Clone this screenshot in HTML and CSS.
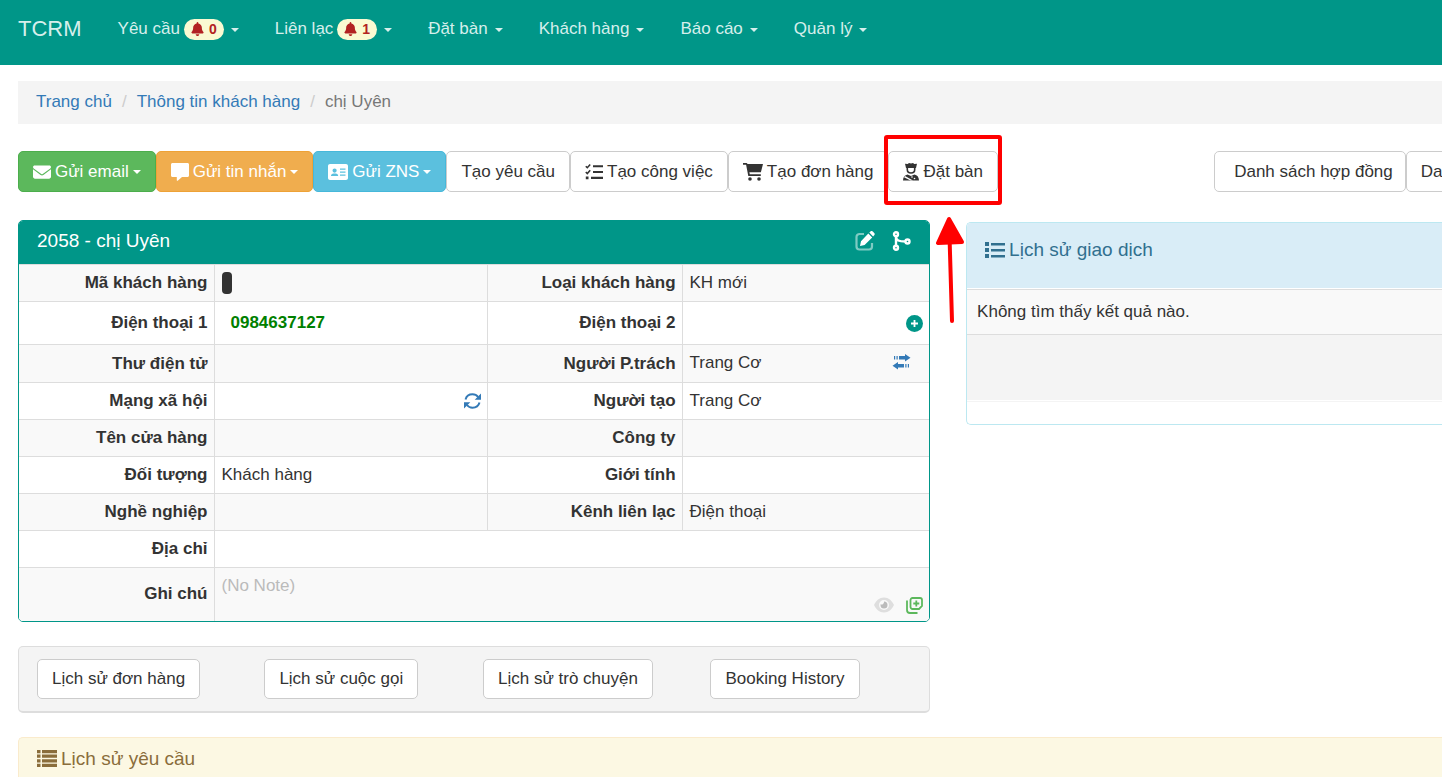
FILE: index.html
```html
<!DOCTYPE html>
<html lang="vi">
<head>
<meta charset="utf-8">
<meta name="viewport" content="width=device-width, initial-scale=1">
<title>TCRM</title>
<link rel="stylesheet" href="styles.css">
</head>
<body>
<svg class="sprite" aria-hidden="true">
  <symbol id="bell" viewBox="0 0 448 512"><path d="M224 0c-18 0-32 14-32 32v19C119 66 64 130 64 208v19c0 47-17 92-48 127l-8 9c-8 9-10 23-5 34s16 19 29 19h384c13 0 24-7 29-19s3-25-5-34l-8-9c-31-35-48-80-48-127v-19c0-78-55-142-128-157V32c0-18-14-32-32-32zM288 448H160c0 17 7 33 19 45s28 19 45 19 33-7 45-19 19-28 19-45z"/></symbol>
  <symbol id="list-ul" viewBox="0 0 20 18"><path d="M0 1h4v4H0zM0 7h4v4H0zM0 13h4v4H0zM6 2h14v2.500H6zM6 8h14v2.500H6zM6 14h14v2.500H6z"/></symbol>
</svg>

<nav class="navbar">
  <a class="brand" href="#">TCRM</a>
  <a class="nav-item" href="#">Yêu cầu <span class="badge"><svg class="bell"><use href="#bell"/></svg>0</span><span class="caret"></span></a>
  <a class="nav-item" href="#">Liên lạc <span class="badge"><svg class="bell"><use href="#bell"/></svg>1</span><span class="caret"></span></a>
  <a class="nav-item" href="#">Đặt bàn<span class="caret"></span></a>
  <a class="nav-item" href="#">Khách hàng<span class="caret"></span></a>
  <a class="nav-item" href="#">Báo cáo<span class="caret"></span></a>
  <a class="nav-item" href="#">Quản lý<span class="caret"></span></a>
</nav>

<main class="page">
  <ol class="breadcrumb">
    <li><a href="#">Trang chủ</a></li>
    <li><a href="#">Thông tin khách hàng</a></li>
    <li>chị Uyên</li>
  </ol>

  <div class="toolbar">
    <div class="actions">
      <button class="btn green" type="button"><svg class="icon" viewBox="0 0 18 18"><path d="M1.700 2.500h14.600c.9 0 1.700.7 1.700 1.600 0 .5-.3 1-.7 1.300L9.700 11.100c-.4.300-1 .3-1.400 0L.7 5.400C.3 5.100 0 4.600 0 4.100c0-.9.800-1.600 1.700-1.600zM0 6.300l7.600 5.700c.8.600 2 .6 2.800 0L18 6.300v7.500c0 1-.9 1.900-2 1.900H2c-1.100 0-2-.9-2-1.900z"/></svg>Gửi email<span class="caret"></span></button>
      <button class="btn orange" type="button"><svg class="icon" viewBox="0 0 18 18"><path d="M1.500 0h15c.8 0 1.500.700 1.500 1.500v11c0 .8-.7 1.500-1.500 1.500H11l-4.300 3.700c-.4.300-.9.100-.9-.4V14H1.500C.700 14 0 13.300 0 12.500v-11C0 .7.7 0 1.500 0z"/></svg>Gửi tin nhắn<span class="caret"></span></button>
      <button class="btn blue" type="button"><svg class="icon wide" viewBox="0 0 20 18"><path fill-rule="evenodd" d="M2 1h16c1.100 0 2 .9 2 2v12c0 1.100-.9 2-2 2H2c-1.100 0-2-.9-2-2V3c0-1.100.9-2 2-2zm4.600 4.500a2.100 2.100 0 1 0 0 4.200 2.100 2.100 0 0 0 0-4.200zM5.600 10.500C4 10.500 3 11.500 3 13h7.200c0-1.500-1-2.500-2.600-2.500zM12 5.500v1.200h5.500V5.500zm0 3v1.200h5.500V8.500zm0 3v1.200h5.500v-1.200z"/></svg>Gửi ZNS<span class="caret"></span></button>
      <button class="btn" type="button">Tạo yêu cầu</button>
      <button class="btn" type="button"><svg class="icon" viewBox="0 0 18 18"><path d="M8 2.200h10v2.100H8zM8 8h10v2.100H8zM6 13.800h12v2.100H6zM.8 13.500h2.700v2.700H.8z"/><path class="stroke" d="M.8 3.200l1.500 1.500L5.200 1.500M.8 9l1.500 1.500 2.900-3.200"/></svg>Tạo công việc</button>
      <button class="btn" type="button"><svg class="icon wide" viewBox="0 0 20 18"><path d="M0 0h3.300c.6 0 1 .4 1.200 1H20l-2.100 8.300H6.400l.4 2h11v1.700H5.300L3.100 1.700H0z"/><circle cx="7" cy="16" r="1.800"/><circle cx="16" cy="16" r="1.800"/></svg>Tạo đơn hàng</button>
      <div class="highlighted">
        <button class="btn" type="button"><svg class="icon chef" viewBox="0 0 16 18"><path d="M2 .8L4.700 1 6 0l2 .6L10 0l1.300 1 2.700-.2L13 5H3z"/><path class="stroke" d="M4.300 4.500v2C4.300 8.600 5.800 10 8 10s3.700-1.400 3.700-3.500v-2"/><path d="M0 17.500c0-3.400 2-5.600 4.500-6L8 13l3.500-1.500c2.500.4 4.500 2.600 4.500 6z"/><path class="dot" d="M2 13l8 4.500H7.500L1 14.300z"/><circle class="dot" cx="9" cy="14" r=".8"/><circle class="dot" cx="11.500" cy="15.500" r=".8"/></svg>Đặt bàn</button>
        <span class="marker"></span>
        <svg class="arrow" viewBox="0 0 28 108" aria-hidden="true"><path d="M13 3L2 27l24-1z" fill="#f00" stroke="#f00" stroke-width="4" stroke-linejoin="round"/><path d="M13.500 20L16 105" stroke="#f00" stroke-width="4" stroke-linecap="round"/></svg>
      </div>
    </div>
    <div class="lists">
      <button class="btn roomy" type="button">Danh sách hợp đồng</button>
      <button class="btn" type="button">Danh sách</button>
    </div>
  </div>

  <div class="columns">
    <div class="left">
      <section class="panel customer">
        <header>
          <h2>2058 - chị Uyên</h2>
          <button class="plain" type="button" aria-label="Edit"><svg width="20" height="20" viewBox="0 0 20 20"><path d="M9 3H4.500A3 3 0 0 0 1.500 6v9.500a3 3 0 0 0 3 3H14a3 3 0 0 0 3-3V12" fill="none" stroke="#7fcbc3" stroke-width="2.200"/><path fill="#fff" d="M13.300 2.500l3.900 3.900-7.600 7.600-4.600 1 1-4.700zM14.300 1.500L15.400.5c.7-.7 1.700-.7 2.400 0l1.400 1.400c.7.7.7 1.700 0 2.400l-1.100 1.100z"/></svg></button>
          <button class="plain" type="button" aria-label="Merge"><svg width="19" height="20" viewBox="0 0 19 20"><g fill="none" stroke="#fff" stroke-width="2.400"><circle cx="4" cy="3.200" r="2"/><circle cx="4" cy="16.800" r="2"/><circle cx="15.500" cy="10.500" r="2"/><path d="M4 5.300v9.400M4 5.500c0 4 3 5 9.400 5"/></g></svg></button>
        </header>
        <table>
          <colgroup><col class="c-label"><col class="c-value"><col class="c-label"><col class="c-last"></colgroup>
          <tbody>
          <tr><th scope="row">Mã khách hàng</th><td><span class="redacted"></span></td><th scope="row">Loại khách hàng</th><td>KH mới</td></tr>
          <tr class="phone"><th scope="row">Điện thoại 1</th><td><a class="tel" href="#">0984637127</a></td><th scope="row">Điện thoại 2</th><td><div class="end"><button class="plain" type="button" aria-label="Add"><svg width="17" height="17" viewBox="0 0 17 17"><circle cx="8.500" cy="8.500" r="8.500" fill="#009688"/><path d="M8.500 5v7M5 8.500h7" stroke="#fff" stroke-width="1.800"/></svg></button></div></td></tr>
          <tr class="assigned"><th scope="row">Thư điện tử</th><td></td><th scope="row">Người P.trách</th><td><div class="split owner">Trang Cơ<button class="plain" type="button" aria-label="Transfer"><svg width="19" height="16" viewBox="0 0 19 16"><path fill="#337ab7" d="M2 2h1.200v3.500H2zM4.500 2h1.200v3.500H4.500zM7 2h6V0l5.500 3.800L13 7.500v-2H7zM17 10h-1.200v3.500H17zM14.500 10h-1.200v3.500h1.200zM12 10H6V8L.5 11.800 6 15.500v-2h6z"/></svg></button></div></td></tr>
          <tr><th scope="row">Mạng xã hội</th><td><div class="end"><button class="plain" type="button" aria-label="Refresh"><svg width="17" height="16" viewBox="0 0 17 16"><path d="M1.500 6.500C2.400 3.300 5.200 1.300 8.500 1.300c2.300 0 4.300 1 5.600 2.700M15.500 9.500c-.9 3.200-3.700 5.200-7 5.200-2.300 0-4.300-1-5.600-2.700" fill="none" stroke="#337ab7" stroke-width="2"/><path fill="#337ab7" d="M17 .5v6.300h-6.300zM0 15.500V9.200h6.300z"/></svg></button></div></td><th scope="row">Người tạo</th><td>Trang Cơ</td></tr>
          <tr><th scope="row">Tên cửa hàng</th><td></td><th scope="row">Công ty</th><td></td></tr>
          <tr><th scope="row">Đối tượng</th><td>Khách hàng</td><th scope="row">Giới tính</th><td></td></tr>
          <tr><th scope="row">Nghề nghiệp</th><td></td><th scope="row">Kênh liên lạc</th><td>Điện thoại</td></tr>
          <tr><th scope="row">Địa chỉ</th><td colspan="3"></td></tr>
          <tr class="note"><th scope="row">Ghi chú</th><td colspan="3"><span class="muted">(No Note)</span>
            <div class="end note-tools">
              <button class="plain" type="button" aria-label="View"><svg width="20" height="16" viewBox="0 0 20 16"><path fill="#dedede" fill-rule="evenodd" d="M10 .5c4.500 0 8 3 10 7.500-2 4.500-5.500 7.500-10 7.500S2 12.500 0 8C2 3.500 5.500.5 10 .5zM10 3a5 5 0 1 0 0 10 5 5 0 0 0 0-10z"/><path fill="#bbb" d="M10 4.500a3.500 3.500 0 1 1-3.500 3.500c0-.3 0-.5.1-.7A2.500 2.500 0 0 0 10 4.500z"/></svg></button>
              <button class="plain" type="button" aria-label="Add note"><svg width="17" height="17" viewBox="0 0 17 17"><g fill="none" stroke="#5cb85c" stroke-width="1.800"><path d="M6.500 1H14a2 2 0 0 1 2 2v6l-3 3H6.500a2 2 0 0 1-2-2V3a2 2 0 0 1 2-2zM1 3.500V13a3 3 0 0 0 3 3h7.500M10.300 3.500v6M7.300 6.500h6"/></g></svg></button>
            </div></td></tr>
          </tbody>
        </table>
      </section>

      <section class="history">
        <div><button class="btn" type="button">Lịch sử đơn hàng</button></div>
        <div><button class="btn" type="button">Lịch sử cuộc gọi</button></div>
        <div><button class="btn" type="button">Lịch sử trò chuyện</button></div>
        <div><button class="btn" type="button">Booking History</button></div>
      </section>
    </div>

    <section class="panel deals">
      <header><h2><svg class="icon wide"><use href="#list-ul"/></svg>Lịch sử giao dịch</h2></header>
      <p class="empty">Không tìm thấy kết quả nào.</p>
      <div class="panel-footer"></div>
    </section>
  </div>

  <section class="requests">
    <h2><svg class="icon wide" viewBox="0 0 20 18"><path d="M0 0h3.500v3.200H0zM0 4.600h3.500v3.200H0zM0 9.200h3.500v3.200H0zM0 13.800h3.500V17H0zM5 0h15v3.200H5zM5 4.600h15v3.200H5zM5 9.200h15v3.200H5zM5 13.800h15V17H5z"/></svg>Lịch sử yêu cầu</h2>
  </section>
</main>
</body>
</html>
```
FILE: styles.css
```css
* { box-sizing: border-box; }
body {
  margin: 0;
  background: #fff;
  color: #333;
  font: 17px/24px "Liberation Sans", Arial, sans-serif;
}
a { color: #337ab7; text-decoration: none; }
h2 { margin: 0; font-size: 19px; line-height: 22px; font-weight: 400; }
button { font: inherit; color: inherit; cursor: pointer; }
svg { display: block; fill: currentColor; flex: none; }
.sprite { position: absolute; width: 0; height: 0; }

.caret {
  display: inline-block;
  border: 4px solid transparent;
  border-top-color: currentColor;
  border-bottom: 0;
}

.navbar {
  display: flex;
  align-items: flex-start;
  gap: 36px;
  min-height: 65px;
  padding: 17px 18px;
  background: #009688;
}
.navbar a { color: #d6efec; white-space: nowrap; }
.navbar .brand { font-size: 22px; }
.nav-item { display: flex; align-items: center; gap: 4px; }
.nav-item .caret { margin: 1px 0 0 3px; }
.badge {
  display: flex;
  align-items: center;
  gap: 5px;
  height: 21px;
  padding: 0 7px;
  border-radius: 11px;
  background: #fafad2;
  color: #b22222;
  font-size: 14px;
  font-weight: 700;
}
.bell { width: 13px; height: 14px; }

.page { padding: 16px 0 0 18px; overflow: hidden; }

.breadcrumb {
  display: flex;
  margin: 0 0 27px;
  padding: 9px 18px 10px;
  list-style: none;
  background: #f4f4f4;
  color: #777;
}
.breadcrumb li + li::before { content: "/"; padding: 0 10px; color: #ccc; }

.toolbar { display: flex; justify-content: space-between; margin-bottom: 28px; }
.actions { display: flex; }
.lists { display: flex; flex: 0 0 16%; overflow: hidden; }
.btn {
  display: inline-flex;
  flex: none;
  align-items: center;
  gap: 4px;
  height: 41px;
  padding: 0 14px;
  border: 1px solid #ccc;
  border-radius: 5px;
  background: #fff;
  white-space: nowrap;
}
.btn.roomy { padding: 0 12px 0 19px; }
.btn.green { background: #5cb85c; border-color: #4cae4c; color: #fff; }
.btn.orange { background: #f0ad4e; border-color: #eea236; color: #fff; }
.btn.blue { background: #5bc0de; border-color: #46b8da; color: #fff; }
.icon { width: 18px; height: 18px; }
.icon.wide { width: 20px; }
.icon.chef { width: 16px; }
.stroke { fill: none; stroke: currentColor; stroke-width: 1.6; }
.dot { fill: #fff; }

.highlighted { position: relative; }
.marker {
  position: absolute;
  inset: -16px -4px -13px;
  border: 4px solid #f00;
  border-radius: 3px;
  pointer-events: none;
}
.arrow {
  position: absolute;
  top: 65px;
  left: 48px;
  z-index: 1;
  width: 28px;
  height: 108px;
  pointer-events: none;
}

.columns {
  display: grid;
  grid-template-columns: minmax(0, 23fr) minmax(0, 12fr);
  align-items: start;
  gap: 36px;
}
.panel { border: 1px solid; border-radius: 5px; overflow: hidden; }
.customer { border-color: #009688; }
.customer header {
  display: flex;
  align-items: center;
  gap: 17px;
  height: 43px;
  padding: 0 18px 4px;
  background: #009688;
  color: #fff;
}
.customer h2 { margin-right: auto; }
.plain { display: inline-flex; padding: 0; border: 0; background: none; }

table { width: 100%; border-collapse: collapse; table-layout: fixed; }
.c-label { width: 195px; }
.c-value { width: 30%; }
tr { height: 37px; }
tr.phone { height: 43px; }
tr.assigned { height: 38px; }
tr.note { height: 53px; }
tbody tr:nth-child(odd) { background: #f9f9f9; }
th, td { padding: 6px; border: 1px solid #ddd; line-height: 24px; }
th { text-align: right; }
td { padding-left: 7px; text-align: left; }
tr > :first-child { border-left: 0; }
tr > :last-child { border-right: 0; }
tr:last-child > * { border-bottom: 0; }
.end { display: flex; justify-content: flex-end; }
.split { display: flex; justify-content: space-between; align-items: center; }
.assigned td { vertical-align: top; }
.owner { padding-right: 12px; }
.owner .plain { padding-bottom: 3px; }
.redacted { display: block; width: 10px; height: 22px; border-radius: 4px; background: #333; }
.tel { padding-left: 9px; color: #008000; font-weight: 700; }
.note td { line-height: 22px; }
.muted { display: block; color: #bbb; }
.note-tools { align-items: center; gap: 12px; }

.history {
  display: grid;
  grid-template-columns: 26fr 25fr 26fr 25fr;
  margin-top: 24px;
  padding: 12px 0 12px 18px;
  border: 1px solid #ddd;
  border-bottom-width: 2px;
  border-radius: 5px;
  background: #f4f4f4;
}
.history div { display: flex; }
.history .btn { height: 40px; }

.deals {
  margin-top: 2px;
  padding-bottom: 24px;
  border-color: #bce8f1;
  border-right: 0;
  border-radius: 5px 0 0 5px;
}
.deals header { height: 66px; padding: 16px 18px; background: #d9edf7; color: #31708f; border-bottom: 1px solid #fff; }
.deals h2, .requests h2 { display: flex; align-items: center; gap: 4px; }
.empty {
  margin: 0;
  padding: 10px;
  border: solid #ddd;
  border-width: 1px 0;
  background: #f9f9f9;
}
.panel-footer { height: 65px; background: #f4f4f4; box-shadow: 0 1px #fff, 0 2px #f4f4f4; }

.requests {
  margin-top: 24px;
  padding: 10px 18px 7px;
  border: solid #faebcc;
  border-width: 1px 0 0 1px;
  border-radius: 5px 0 0;
  background: #fcf8e3;
  color: #8a6d3b;
}
```
